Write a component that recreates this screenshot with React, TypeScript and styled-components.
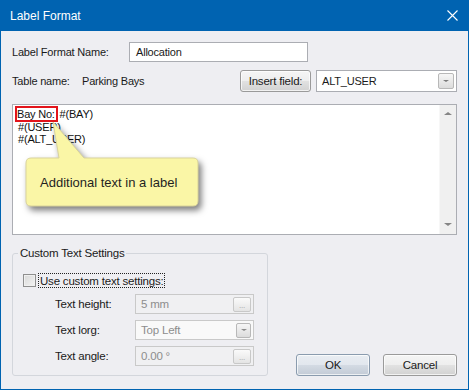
import React from "react";
import styled, { createGlobalStyle } from "styled-components";

const GlobalStyle = createGlobalStyle`
  html, body {
    margin: 0;
    padding: 0;
    background: #ffffff;
  }
  body {
    font-family: "Liberation Sans", Arial, sans-serif;
  }
`;

const Window = styled.div`
  width: 469px;
  height: 390px;
  box-sizing: border-box;
  display: flex;
  flex-direction: column;
  background: #eeeef2;
  border: 1px solid #0063b1;
  border-top: none;
  font-family: "Liberation Sans", Arial, sans-serif;
  font-size: 11px;
  letter-spacing: -0.2px;
  color: #1a1a1a;
`;

const TitleBar = styled.div`
  height: 31px;
  flex: none;
  display: flex;
  align-items: center;
  justify-content: space-between;
  padding: 0 10px 0 9px;
  background: #0063b1;
  color: #ffffff;
  font-size: 12px;
  letter-spacing: 0;
`;

const CloseIcon = styled.svg`
  width: 11px;
  height: 11px;
`;

const Body = styled.div`
  flex: 1;
  display: flex;
  flex-direction: column;
  padding: 11px 11px 13px 11px;
`;

const Row = styled.div<{ $mt?: number }>`
  display: flex;
  align-items: center;
  margin-top: ${(p) => p.$mt ?? 0}px;
`;

const Label = styled.div<{ $w: number }>`
  width: ${(p) => p.$w}px;
  flex: none;
  white-space: nowrap;
`;

const Spacer = styled.div`
  flex: 1;
`;

const TextBox = styled.div<{ $w: number }>`
  width: ${(p) => p.$w}px;
  height: 20px;
  box-sizing: border-box;
  display: flex;
  align-items: center;
  padding-left: 6px;
  background: #ffffff;
  border: 1px solid #abadb3;
`;

const Button = styled.div<{ $w: number; $default?: boolean }>`
  width: ${(p) => p.$w}px;
  height: 22px;
  box-sizing: border-box;
  display: flex;
  align-items: center;
  justify-content: center;
  font-size: 11.5px;
  letter-spacing: -0.2px;
  border: 1px solid ${(p) => (p.$default ? "#8a9bae" : "#9a9a9a")};
  border-radius: 3px;
  background: ${(p) =>
    p.$default
      ? "linear-gradient(#e9edf2 0%, #e2e7ee 48%, #d3dae3 52%, #c3cbd6 100%)"
      : "linear-gradient(#f5f5f5 0%, #eeeeee 48%, #e1e1e1 52%, #d2d2d2 100%)"};
  box-shadow: inset 0 0 0 1px rgba(255, 255, 255, 0.7);
`;

const Combo = styled.div<{ $w: number; $h: number; $disabled?: boolean }>`
  width: ${(p) => p.$w}px;
  height: ${(p) => p.$h}px;
  box-sizing: border-box;
  display: flex;
  align-items: center;
  justify-content: space-between;
  padding: 0 2px 0 5px;
  background: ${(p) => (p.$disabled ? "#f9f9f9" : "#ffffff")};
  border: 1px solid ${(p) => (p.$disabled ? "#c9c9c9" : "#abadb3")};
  color: ${(p) => (p.$disabled ? "#8d8d8d" : "#1a1a1a")};
`;

const DropButton = styled.div<{ $size: number }>`
  width: ${(p) => p.$size}px;
  height: ${(p) => p.$size}px;
  box-sizing: border-box;
  display: flex;
  align-items: center;
  justify-content: center;
  border: 1px solid #b8b8b8;
  border-radius: 2px;
  background: linear-gradient(#f6f6f6, #dcdcdc);
`;

const Arrow = styled.div<{ $dir: "up" | "down"; $size: number; $color: string }>`
  width: 0;
  height: 0;
  border-left: ${(p) => p.$size}px solid transparent;
  border-right: ${(p) => p.$size}px solid transparent;
  ${(p) =>
    p.$dir === "down"
      ? `border-top: ${p.$size - 1}px solid ${p.$color};`
      : `border-bottom: ${p.$size - 1}px solid ${p.$color};`}
`;

const Value = styled.div`
  margin-left: 0;
`;

const Editor = styled.div`
  position: relative;
  margin-top: 12px;
  height: 131px;
  box-sizing: border-box;
  display: flex;
  background: #ffffff;
  border: 1px solid #abadb3;
`;

const EditorText = styled.div`
  flex: 1;
  padding: 3px 4px;
  font-size: 11px;
  line-height: 12.5px;
  color: #111111;
`;

const Line = styled.div<{ $indent?: number }>`
  padding-left: ${(p) => p.$indent ?? 0}px;
`;

const Marked = styled.span`
  outline: 2px solid #e3141b;
  outline-offset: 0;
  padding-right: 1px;
  margin-right: 1px;
`;

const ScrollBar = styled.div`
  width: 17px;
  flex: none;
  display: flex;
  flex-direction: column;
  justify-content: space-between;
  align-items: center;
  padding: 7px 0 8px;
  box-sizing: border-box;
  background: #f0f0f0;
  border-left: 1px solid #f7f7f7;
`;

const Callout = styled.div`
  position: absolute;
  left: 12px;
  top: 16px;
  width: 180px;
  height: 92px;
`;

const CalloutShape = styled.svg`
  position: absolute;
  inset: 0;
  overflow: visible;
  filter: drop-shadow(3px 4px 3px rgba(0, 0, 0, 0.5));
`;

const CalloutText = styled.div`
  position: absolute;
  left: 15px;
  top: 54px;
  font-size: 13px;
  letter-spacing: 0;
  color: #1f1f1f;
`;

const Bottom = styled.div`
  display: flex;
  align-items: flex-end;
  margin-top: 12px;
`;

const GroupBox = styled.fieldset`
  width: 256px;
  box-sizing: border-box;
  margin: 0;
  padding: 0 0 9px 0;
  min-width: 0;
  border: 1px solid #d3d6dc;
  border-radius: 3px;
`;

const Legend = styled.legend`
  margin-left: 5px;
  padding: 0 2px;
  font-size: 11.5px;
  line-height: 13px;
`;

const CheckRow = styled.div`
  display: flex;
  align-items: center;
  height: 15px;
  margin-top: 13px;
  padding-left: 10px;
`;

const CheckBox = styled.div`
  width: 13px;
  height: 13px;
  box-sizing: border-box;
  border: 1px solid #8f8f8f;
  background: linear-gradient(135deg, #d8d8d8, #f4f4f4);
  box-shadow: inset 0 0 0 1px #f0f0f0;
`;

const FocusLabel = styled.div`
  margin-left: 2px;
  height: 15px;
  box-sizing: border-box;
  display: flex;
  align-items: center;
  padding: 0 1px;
  border: 1px dotted #222222;
  font-size: 11.5px;
`;

const FieldRow = styled.div`
  display: flex;
  align-items: center;
  margin-top: 6px;
  padding-left: 42px;
  font-size: 11.5px;
`;

const DisabledBox = styled.div`
  width: 119px;
  height: 20px;
  box-sizing: border-box;
  display: flex;
  align-items: center;
  justify-content: space-between;
  padding: 0 2px 0 5px;
  background: #f0f0f2;
  border: 1px solid #c9c9c9;
  color: #8d8d8d;
`;

const EllipsisButton = styled.div`
  width: 18px;
  height: 15px;
  box-sizing: border-box;
  display: flex;
  align-items: flex-end;
  justify-content: center;
  padding-bottom: 2px;
  border: 1px solid #c8c8c8;
  border-radius: 2px;
  background: linear-gradient(#fafafa, #e4e4e4);
  color: #a0a0a0;
  font-size: 8px;
  line-height: 6px;
`;

const ButtonGroup = styled.div`
  display: flex;
  gap: 13px;
  margin-left: auto;
`;

export default function App() {
  return (
    <>
      <GlobalStyle />
      <Window>
        <TitleBar>
          <span>Label Format</span>
          <CloseIcon viewBox="0 0 11 11">
            <path d="M0.5 0.5 L10.5 10.5 M10.5 0.5 L0.5 10.5" stroke="#ffffff" strokeWidth="1.1" />
          </CloseIcon>
        </TitleBar>
        <Body>
          <Row>
            <Label $w={117}>Label Format Name:</Label>
            <TextBox $w={179}>Allocation</TextBox>
          </Row>
          <Row $mt={8}>
            <Label $w={70}>Table name:</Label>
            <Value>Parking Bays</Value>
            <Spacer />
            <Button $w={71}>Insert field:</Button>
            <Combo $w={141} $h={22} style={{ marginLeft: 5 }}>
              <span>ALT_USER</span>
              <DropButton $size={16}>
                <Arrow $dir="down" $size={3} $color="#7a7a7a" />
              </DropButton>
            </Combo>
          </Row>
          <Editor>
            <EditorText>
              <Line>
                <Marked>Bay No:</Marked> #(BAY)
              </Line>
              <Line $indent={1}>#(USER)</Line>
              <Line $indent={1}>#(ALT_USER)</Line>
            </EditorText>
            <ScrollBar>
              <Arrow $dir="up" $size={4} $color="#858585" />
              <Arrow $dir="down" $size={4} $color="#858585" />
            </ScrollBar>
            <Callout>
              <CalloutShape viewBox="0 0 180 92" width="180" height="92">
                <path
                  d="M6 37 L34 37 L28 1 L59 37 L168 37 Q173 37 173 42 L173 80 Q173 85 168 85 L6 85 Q1 85 1 80 L1 42 Q1 37 6 37 Z"
                  fill="#faf6a6"
                  stroke="#d9d39a"
                  strokeWidth="1"
                />
              </CalloutShape>
              <CalloutText>Additional text in a label</CalloutText>
            </Callout>
          </Editor>
          <Bottom>
            <GroupBox>
              <Legend>Custom Text Settings</Legend>
              <CheckRow>
                <CheckBox />
                <FocusLabel>Use custom text settings:</FocusLabel>
              </CheckRow>
              <FieldRow>
                <Label $w={80}>Text height:</Label>
                <DisabledBox>
                  <span>5 mm</span>
                  <EllipsisButton>...</EllipsisButton>
                </DisabledBox>
              </FieldRow>
              <FieldRow>
                <Label $w={80}>Text lorg:</Label>
                <Combo $w={119} $h={20} $disabled>
                  <span>Top Left</span>
                  <DropButton $size={15}>
                    <Arrow $dir="down" $size={3} $color="#8a8a8a" />
                  </DropButton>
                </Combo>
              </FieldRow>
              <FieldRow>
                <Label $w={80}>Text angle:</Label>
                <DisabledBox>
                  <span>0.00 °</span>
                  <EllipsisButton>...</EllipsisButton>
                </DisabledBox>
              </FieldRow>
            </GroupBox>
            <ButtonGroup>
              <Button $w={74} $default>
                OK
              </Button>
              <Button $w={74}>Cancel</Button>
            </ButtonGroup>
          </Bottom>
        </Body>
      </Window>
    </>
  );
}
